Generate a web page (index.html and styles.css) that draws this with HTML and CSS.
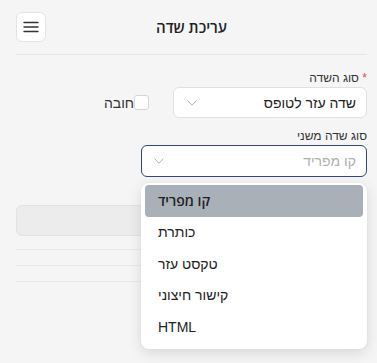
FILE: index.html
```html
<!DOCTYPE html>
<html lang="he" dir="rtl">
<head>
<meta charset="utf-8">
<link rel="stylesheet" href="styles.css">
</head>
<body>
<div class="page">
  <header class="header">
    <div class="spacer"></div>
    <h1 class="title">עריכת שדה</h1>
    <button class="menu-btn" aria-label="menu">
      <svg width="16" height="12" viewBox="0 0 16 12"><path d="M1 1.5h14M1 6h14M1 10.5h14" stroke="#333" stroke-width="1.3" stroke-linecap="round"/></svg>
    </button>
  </header>

  <div class="field">
    <label class="label"><span class="req">*</span> סוג השדה</label>
    <div class="row">
      <div class="select">
        <span class="value">שדה עזר לטופס</span>
        <svg class="chev" width="10" height="6" viewBox="0 0 10 6"><path d="M0.5 0.5L5 5.2 9.5 0.5" fill="none" stroke="#b5b5b5" stroke-width="1"/></svg>
      </div>
      <label class="check"><span class="box"></span><span>חובה</span></label>
    </div>
  </div>

  <div class="field field2">
    <label class="label">סוג שדה משני</label>
    <div class="select select-focus">
      <span class="value placeholder">קו מפריד</span>
      <svg class="chev" width="10" height="6" viewBox="0 0 10 6"><path d="M0.5 0.5L5 5.2 9.5 0.5" fill="none" stroke="#b5b5b5" stroke-width="1"/></svg>
    </div>
    <ul class="menu">
      <li class="item active">קו מפריד</li>
      <li class="item">כותרת</li>
      <li class="item">טקסט עזר</li>
      <li class="item">קישור חיצוני</li>
      <li class="item">HTML</li>
    </ul>
  </div>

  <div class="ghost-box"></div>
  <div class="ghost-line first"></div>
  <div class="ghost-line"></div>
  <div class="ghost-line"></div>
</div>
</body>
</html>
```

FILE: styles.css
```css
* { box-sizing: border-box; }
html, body { margin: 0; padding: 0; }
body {
  background: #f5f5f5;
  font-family: "Liberation Sans", "DejaVu Sans", sans-serif;
  color: #222;
  width: 377px;
  height: 363px;
  overflow: hidden;
}
.page {
  padding: 12px 10px 0 16px;
}
.header {
  display: grid;
  grid-template-columns: 30px 1fr 30px;
  align-items: center;
  padding-bottom: 12px;
  border-bottom: 1px solid #e6e6e6;
}
.title {
  margin: 0;
  text-align: center;
  font-family: "Open Sans", "Liberation Sans", sans-serif;
  font-size: 15px;
  font-weight: 600;
  color: #222;
}
.menu-btn {
  width: 30px;
  height: 30px;
  padding: 0;
  border: 1px solid #e3e3e3;
  border-radius: 6px;
  background: #fff;
  display: flex;
  align-items: center;
  justify-content: center;
}
.field { margin-top: 15px; }
.label {
  display: block;
  font-size: 12px;
  line-height: 16px;
  color: #333;
  margin-bottom: 1px;
}
.req { color: #e5484d; }
.row {
  display: flex;
  align-items: center;
  gap: 24px;
}
.select {
  width: 194px;
  height: 31px;
  background: #fff;
  border: 1px solid #e0e0e0;
  border-radius: 6px;
  display: flex;
  align-items: center;
  justify-content: space-between;
  padding: 0 10px 0 13px;
}
.value { font-size: 14px; color: #222; }
.placeholder { color: #b0b0b0; }
.chev { display: block; }
.check {
  display: flex;
  align-items: center;
  font-size: 14px;
  color: #333;
}
.box {
  width: 15px;
  height: 15px;
  border: 1px solid #d6d6d6;
  border-radius: 3px;
  background: #fff;
}
.field2 { position: relative; margin-top: 10px; }
.select-focus {
  width: 226px;
  height: 32px;
  border: 1.5px solid #34467a;
  border-radius: 6px;
  padding-left: 12px;
}
.menu {
  position: absolute;
  top: 55px;
  right: 0;
  width: 226px;
  margin: 0;
  padding: 2px 4px 6px;
  list-style: none;
  background: #fff;
  border-radius: 8px;
  box-shadow: 0 4px 14px rgba(0,0,0,0.12), 0 0 2px rgba(0,0,0,0.06);
  z-index: 5;
  direction: ltr;
}
.item {
  height: 31.5px;
  line-height: 31.5px;
  padding: 0 13px;
  font-size: 14px;
  color: #222;
  text-align: left;
  border-radius: 4px;
}
.item.active {
  background: #a9b0b8;
  font-family: "Open Sans", "Liberation Sans", sans-serif;
  font-weight: 600;
  height: 32px;
}
.ghost-box {
  margin-top: 28px;
  height: 31px;
  background: #ececec;
  border: 1px solid #e2e2e2;
  border-radius: 6px;
}
.ghost-line {
  height: 1px;
  background: #e8e8e8;
  margin-top: 15px;
}
.ghost-line.first { margin-top: 13px; }
```
